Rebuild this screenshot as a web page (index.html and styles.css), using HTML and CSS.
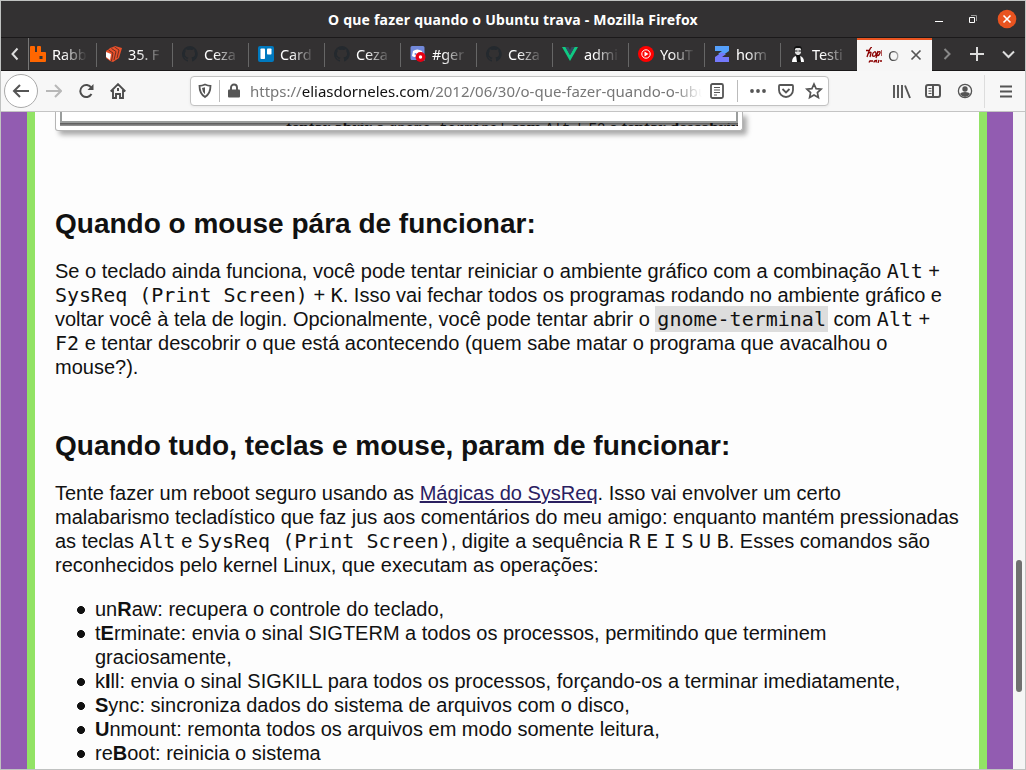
FILE: index.html
```html
<!DOCTYPE html>
<html lang="pt-BR">
<head>
<meta charset="utf-8">
<title>O que fazer quando o Ubuntu trava</title>
<link rel="stylesheet" href="styles.css">
</head>
<body>
<div class="window">
  <header class="titlebar">
    <h1 class="title"><span>O que fazer quando o Ubuntu trava - Mozilla Firefox</span></h1>
    <div class="controls">
      <svg width="86" height="36" viewBox="0 0 86 36"><path d="M4 20.5h8" stroke="#fff"/><path d="M38.500 16.500h5v5h-5z" stroke="#fff" fill="none"/><path d="M40 14.500h5.500v5.500" stroke="#999" fill="none"/><circle cx="76" cy="18" r="9.300" fill="#e95420"/><path d="M72.500 14.500l7 7m0-7l-7 7" stroke="#fff" stroke-width="1.600"/></svg>
    </div>
  </header>

  <nav class="tabs">
    <div class="scroll-left"><svg width="16" height="16" viewBox="0 0 16 16"><path d="M11.500 2.500L6.500 8l5 5.500" fill="none" stroke="#ddd" stroke-width="2"/></svg></div>
    <div class="tab"><svg class="icon" viewBox="0 0 16 16"><path d="M1 0h3q1 0 1 1v5h2V1q0-1 1-1h2q1 0 1 1v5h4q1 0 1 1v8q0 1-1 1H0V1q0-1 1-1z" fill="#f60"/><path d="M9.500 10h3v3h-3z" fill="#333"/></svg><span class="label">Rabb</span></div>
    <div class="tab"><svg class="icon" viewBox="0 0 16 16"><path d="M0 5l3-2 1-1 3-1 2-1 7 2-3 10-6 4-3-1-4-3z" fill="#e8502a"/><path d="M0 6l5 2-1 6-4-3z" fill="#fff"/><path d="M2.500 4l4.500 3-1.500 8M5.500 2.500l4.500 3L8 14M8.500 1l4.500 3-2 8" fill="none" stroke="#5c2a22" stroke-width=".9"/></svg><span class="label">35. F</span></div>
    <div class="tab"><svg class="icon gh" viewBox="0 0 16 16"><use href="#octo"/></svg><span class="label">Ceza</span></div>
    <div class="tab"><svg class="icon" viewBox="0 0 16 16"><rect width="16" height="16" rx="2" fill="#0079bf"/><rect x="2.500" y="2.500" width="4.500" height="10.500" rx=".8" fill="#fff"/><rect x="9" y="2.500" width="4.500" height="6" rx=".8" fill="#fff"/></svg><span class="label">Card</span></div>
    <div class="tab"><svg class="icon gh" viewBox="0 0 16 16"><use href="#octo"/></svg><span class="label">Ceza</span></div>
    <div class="tab"><svg class="icon" viewBox="0 0 16 16"><path d="M2 0h11q1.500 0 1.500 1.500V15L12 14H2q-1.500 0-1.500-1.500v-11Q.5 0 2 0z" fill="#7289da"/><path d="M3 5q4-3 9 0l1 5-3 1H4l-2-1z" fill="#fff"/><circle cx="5.500" cy="8" r="1" fill="#7289da"/><circle cx="10.500" cy="11" r="5" fill="#e60012"/><circle cx="10.500" cy="11" r="1.700" fill="#fff"/></svg><span class="label">#ger</span></div>
    <div class="tab"><svg class="icon gh" viewBox="0 0 16 16"><use href="#octo"/></svg><span class="label">Ceza</span></div>
    <div class="tab"><svg class="icon" viewBox="0 0 16 16"><path d="M0 1h3.500L8 9l4.500-8H16L8 15z" fill="#10c982"/><path d="M3.500 1h3L8 4l1.500-3h3L8 9z" fill="#35495e"/></svg><span class="label">admi</span></div>
    <div class="tab"><svg class="icon" viewBox="0 0 16 16"><circle cx="8" cy="8" r="8" fill="#f00"/><circle cx="8" cy="8" r="4.200" fill="none" stroke="#fff"/><path d="M6.500 5.500l4 2.500-4 2.500z" fill="#fff"/></svg><span class="label">YouT</span></div>
    <div class="tab"><svg class="icon" viewBox="0 0 16 16"><path d="M1 0h14v5L8.500 9.500Q4 8 1 5z" fill="#55a0fb"/><path d="M1 11l6.500-4.500Q13 8 15 11v5H1z" fill="#7479fb"/><path d="M1 5h7L1 10zM15 11H8l7-5z" fill="#333132"/></svg><span class="label">hom</span></div>
    <div class="tab"><svg class="icon" viewBox="0 0 16 16"><path d="M5 2q3-3 6 0v5l-3 3-3-3z" fill="#ddd"/><path d="M4 4V2q2-3 5-2 3 0 3 4l-2-2H6zM5 4.500h2.500v1H5zM8.500 4.500H11v1H8.500z" fill="#111"/><path d="M2 16q0-5 4-6l2 3 2-3q4 1 4 6z" fill="#fff"/><path d="M6 9h4l1 7H7z" fill="#111"/></svg><span class="label">Testi</span></div>
    <div class="tab active"><svg class="icon" viewBox="0 0 16 16"><g fill="none" stroke="#8b0000" stroke-width="1.300"><path d="M6 0Q4 0 1 10M0 3.500h4M2 7q3-3 3-1l-1 4M9 4.500Q6 6 6.500 9q3 1 3.500-2 0-2-1-2.500M12 4l-2 7M11.500 5.500q3-2 2.500.5-1 3-3 2.500M16 3v6"/><path d="M4 13.500l-1 2M4 14h3M8 15.500q0-2 2.500-2l-.5 2M13 13l-1 3M14 14h2"/></g></svg><span class="label">O</span><svg class="close" viewBox="0 0 16 16"><path d="M3.500 3.500l9 9m0-9l-9 9" stroke="#555" stroke-width="1.700"/></svg></div>
    <div class="tab-actions"><svg width="92" height="32" viewBox="0 0 92 32" fill="none"><path d="M12.500 11l5 5-5 5" stroke="#888" stroke-width="2"/><path d="M38 16h14M45 9v14" stroke="#ddd" stroke-width="2"/><path d="M71 13.500l5.500 5.500 5.500-5.500" stroke="#ddd" stroke-width="2"/></svg></div>
  </nav>

  <div class="toolbar">
    <div class="back"><svg width="18" height="16" viewBox="0 0 18 16" fill="none" stroke="#555" stroke-width="2"><path d="M17 8H2M8 2L2 8l6 6"/></svg></div>
    <svg class="forward" width="16" height="16" viewBox="0 0 16 16" fill="none" stroke="#b8b8b8" stroke-width="2"><path d="M0 8h15M9 2l6 6-6 6"/></svg>
    <svg class="reload" width="16" height="16" viewBox="0 0 16 16"><path d="M13.300 4.800A6 6 0 1 0 13.500 11" fill="none" stroke="#4d4d4d" stroke-width="2"/><path d="M15.500 1v6h-6z" fill="#4d4d4d"/></svg>
    <svg class="home" width="16" height="16" viewBox="0 0 16 16"><path d="M.7 8.500L8 1.200l7.300 7.300M3 7v8h3v-4h4v4h3V7" fill="none" stroke="#4d4d4d" stroke-width="1.900"/><path d="M7 5h2v3H7z" fill="#4d4d4d"/></svg>
    <div class="urlbar">
      <svg class="shield" width="14" height="16" viewBox="0 0 14 16"><path d="M7 1.500q3 1.200 5.500 1.300 0 8-5.500 11.300Q1.500 10.800 1.500 2.800 4 2.700 7 1.500z" fill="none" stroke="#555" stroke-width="1.800"/><path d="M7 4.200v7q-2.600-2-3-6.200z" fill="#555"/></svg>
      <span class="bar"></span>
      <svg class="lock" width="12" height="16" viewBox="0 0 12 16"><path d="M3 7V4.500a3 3 0 0 1 6 0V7" fill="none" stroke="#555" stroke-width="1.900"/><rect y="6.500" width="12" height="8" rx="1" fill="#555"/></svg>
      <span class="url">https://<b>eliasdorneles.com</b>/2012/06/30/o-que-fazer-quando-o-ubu</span>
      <svg width="122" height="24" viewBox="0 0 122 24" fill="none" stroke="#555" stroke-width="1.800"><rect x="6" y="5" width="12" height="14" rx="1.500"/><path d="M9 8.500h6M9 11h6M9 13.500h6M9 16h3" stroke-width="1"/><path d="M32.500 1v22" stroke="#bbb" stroke-width="1"/><g fill="#555" stroke="none"><circle cx="47" cy="12" r="1.900"/><circle cx="53" cy="12" r="1.900"/><circle cx="59" cy="12" r="1.900"/></g><path d="M75 6h12q1 0 1 1v4a7 7 0 0 1-14 0V7q0-1 1-1z"/><path d="M77.500 10l3.500 3.500 3.500-3.500"/><path d="M109 5l2.100 4.600 5 .6-3.700 3.400 1 5-4.400-2.500-4.400 2.500 1-5-3.700-3.400 5-.6z" stroke-width="1.700"/></svg>
    </div>
    <svg class="right-tools" width="136" height="40" viewBox="0 0 136 40" fill="none" stroke="#555" stroke-width="2"><path d="M6 14v13M10 14v13M14 14v13M17 14.500l5 12.500" stroke-width="1.900"/><rect x="38" y="14" width="14" height="12" rx="2"/><path d="M45 14v12"/><path d="M40.500 17.500h3M40.500 20h3M40.500 22.500h3" stroke-width="1"/><circle cx="77" cy="20" r="6.600" stroke-width="1.300"/><circle cx="77" cy="18" r="2.700" fill="#555" stroke="none"/><path d="M72 23q1-2 5-2t5 2q-2 3-5 3t-5-3z" fill="#555" stroke="none"/><path d="M96.500 4v33" stroke="#ddd" stroke-width="1"/><path d="M112 15.500h12M112 20.500h12M112 25.500h12"/></svg>
  </div>

  <main class="viewport">
    <div class="page">
      <div class="shot"><div class="shot-top"></div><div class="shot-text"><span>tentar abrir o <code>gnome-terminal</code> com <code>Alt</code> + <code>F2</code> e tentar descobrir</span></div></div>
      <h2>Quando o mouse pára de funcionar:</h2>
      <p>Se o teclado ainda funciona, você pode tentar reiniciar o ambiente gráfico com a combinação <kbd>Alt</kbd> +<br><kbd>SysReq (Print Screen)</kbd> + <kbd>K</kbd>. Isso vai fechar todos os programas rodando no ambiente gráfico e<br>voltar você à tela de login. Opcionalmente, você pode tentar abrir o <code>gnome-terminal</code> com <kbd>Alt</kbd> +<br><kbd>F2</kbd> e tentar descobrir o que está acontecendo (quem sabe matar o programa que avacalhou o<br>mouse?).</p>
      <h2>Quando tudo, teclas e mouse, param de funcionar:</h2>
      <p>Tente fazer um reboot seguro usando as <a>Mágicas do SysReq</a>. Isso vai envolver um certo<br>malabarismo tecladístico que faz jus aos comentários do meu amigo: enquanto mantém pressionadas<br>as teclas <kbd>Alt</kbd> e <kbd>SysReq (Print Screen)</kbd>, digite a sequência <kbd>R</kbd> <kbd>E</kbd> <kbd>I</kbd> <kbd>S</kbd> <kbd>U</kbd> <kbd>B</kbd>. Esses comandos são<br>reconhecidos pelo kernel Linux, que executam as operações:</p>
      <ul>
        <li>un<b>R</b>aw: recupera o controle do teclado,</li>
        <li>t<b>E</b>rminate: envia o sinal SIGTERM a todos os processos, permitindo que terminem<br>graciosamente,</li>
        <li>k<b>I</b>ll: envia o sinal SIGKILL para todos os processos, forçando-os a terminar imediatamente,</li>
        <li><b>S</b>ync: sincroniza dados do sistema de arquivos com o disco,</li>
        <li><b>U</b>nmount: remonta todos os arquivos em modo somente leitura,</li>
        <li>re<b>B</b>oot: reinicia o sistema</li>
      </ul>
    </div>
    <div class="scrollbar"><div class="thumb"></div></div>
  </main>
</div>
<svg width="0" height="0" class="defs"><symbol id="octo" viewBox="0 0 16 16"><path d="M8 0a8 8 0 0 0-2.500 15.600c.4.100.5-.2.500-.4v-1.500c-2.200.5-2.700-.9-2.700-.9-.4-.9-.9-1.200-.9-1.200-.7-.5.100-.5.100-.5.800.1 1.200.8 1.200.8.700 1.200 1.900.9 2.300.7.100-.5.300-.9.500-1.100-1.800-.2-3.600-.9-3.600-4 0-.9.300-1.600.8-2.100-.1-.2-.4-1 .1-2.100 0 0 .7-.2 2.200.8a7.500 7.500 0 0 1 4 0c1.500-1 2.200-.8 2.200-.8.400 1.100.2 1.900.1 2.100.5.600.8 1.300.8 2.100 0 3.100-1.900 3.700-3.700 3.900.3.300.6.800.6 1.500v2.200c0 .2.100.5.500.4A8 8 0 0 0 8 0z"/></symbol></svg>
</body>
</html>
```
FILE: styles.css
```css
* { box-sizing: border-box; }
body { margin: 0; background: #c0c2c1; overflow: hidden; font-family: "Noto Sans", sans-serif; }
.window { width: 1026px; height: 770px; border: 1px solid #c0c2c1; display: flex; flex-direction: column; }
svg { flex: none; display: block; }
.defs { display: none; }

.titlebar { height: 37px; flex: none; background: #333132; border-bottom: 1px solid #1b191a; display: flex; }
.title { flex: 1; margin: 0; padding: 1px 0 0 94px; text-align: center; color: #fff; font: bold 14px/36px "Noto Sans", sans-serif; letter-spacing: 0.21px; white-space: nowrap; }
.controls { width: 94px; }

.tabs { height: 33px; flex: none; background: #333132; border-bottom: 1px solid #1b191a; display: flex; }
.scroll-left { width: 28px; border-right: 1px solid #777; display: flex; align-items: center; padding-left: 5px; }
.tab { position: relative; width: 76px; display: flex; align-items: center; padding-left: 9px; gap: 6px; }
.scroll-left + .tab { width: 68px; padding-left: 1px; }
.tab::after { content: ""; position: absolute; right: 0; top: 5px; width: 1px; height: 24px; background: #666; }
.tab .icon { width: 16px; height: 16px; }
.gh { fill: #24292e; }
.label { width: 35px; overflow: hidden; white-space: nowrap; font-size: 14.5px; color: #fff; letter-spacing: -0.1px; mask-image: linear-gradient(90deg, #000 30%, transparent 100%); }
.tab.active { background: #f6f6f6; border-top: 2px solid #e95420; height: 33px; width: 75px; padding-bottom: 1px; }
.tab.active::after, .tab:nth-child(12)::after { display: none; }
.tab.active .label { color: #444; width: 14px; }
.close { width: 16px; height: 16px; }
.tab-actions { width: 92px; }

.toolbar { height: 41px; flex: none; background: #f7f7f7; border-bottom: 1px solid #c4c4c4; display: flex; align-items: center; }
.back { width: 34px; height: 34px; border: 1px solid #aaa; border-radius: 50%; background: #fff; margin-left: 3px; display: grid; place-items: center; }
.forward { margin-left: 8px; }
.reload { margin-left: 16px; }
.home { margin-left: 16px; }
.urlbar { margin-left: 64px; width: 639px; height: 30px; background: #fff; border: 1px solid #c2c2c2; border-radius: 4px; display: flex; align-items: center; box-shadow: 0 1px 3px #0001; }
.shield { margin-left: 7px; }
.bar { width: 1px; height: 22px; background: #bbb; margin: 0 8px 0 7px; }
.url { margin: 0 3px 0 10px; width: 452px; overflow: hidden; white-space: nowrap; font-size: 15px; color: #777; mask-image: linear-gradient(90deg, #000 94%, transparent); }
.url b { font-weight: normal; color: #111; }
.right-tools { margin-left: 59px; }

.viewport { flex: 1; min-height: 0; display: flex; overflow: hidden; }
.page { flex: 1; border: solid #925cb1; border-width: 0 26px; background: #fdfdfd; box-shadow: inset 8px 0 #92e365, inset -8px 0 #92e365; padding-left: 28px; font: 20px/24px "Liberation Sans", sans-serif; color: #111; white-space: nowrap; }
.shot { width: 688px; height: 19px; border: 1px solid #b5b5b5; border-top: 0; border-radius: 0 0 3px 3px; background: #fff; box-shadow: 4px 4px 5px #aaa; padding: 0 4px; }
.shot-top { height: 11px; border: solid #9a9d9c; border-width: 0 2px 2px; }
.shot-text { height: 3px; overflow: hidden; background: linear-gradient(#555, #999); padding-left: 226px; font: bold 17px/20px "Liberation Serif", serif; color: #111; }
.shot-text span { display: block; margin-top: -5px; }
.shot-text code { background: none; padding: 0; font: 14px/16px "Liberation Mono", monospace; }
h2 { font-size: 28px; line-height: 34px; margin: 0; }
.shot + h2 { margin-top: 76px; }
p { margin: 18px 0 0; }
p + h2 { margin-top: 50px; }
kbd, code { font: 20px/20px "DejaVu Sans Mono", monospace; }
code { background: #ddd; padding: 1px 2px; }
a { color: #2a2060; text-decoration: underline; }
ul { margin: 20px 0 0; padding-left: 22px; list-style: none; }
li { display: flex; }
li { display: block; padding-left: 18px; background: radial-gradient(circle at 4px 13px, #111 3.6px, transparent 4.3px) no-repeat; }
.scrollbar { width: 12px; background: #f5f5f5; padding: 448px 3px 0; }
.thumb { height: 132px; width: 6px; border-radius: 3px; background: #707070; }
```
